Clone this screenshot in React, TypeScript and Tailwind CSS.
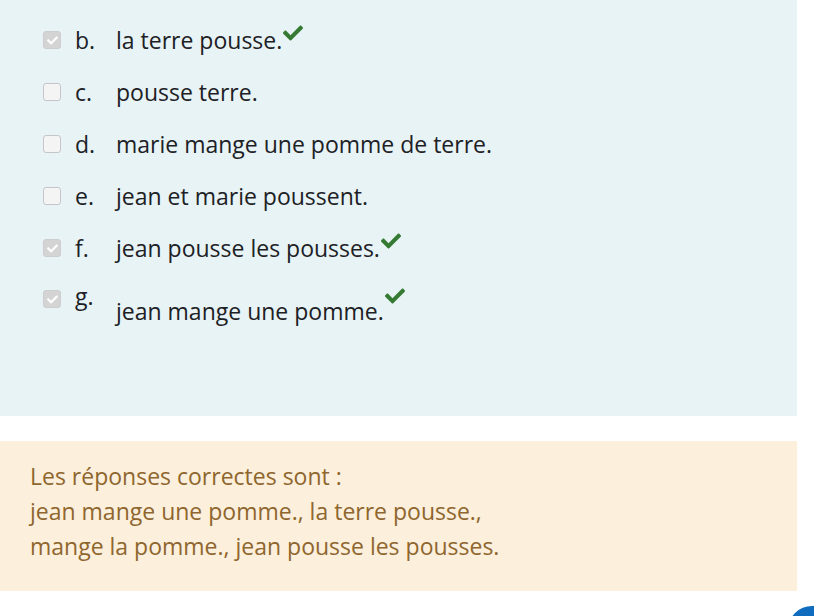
import React from 'react';

type Answer = {
  letter: string;
  text: string;
  checked: boolean;
  correct: boolean;
};

const answers: Answer[] = [
  { letter: 'b.', text: 'la terre pousse.', checked: true, correct: true },
  { letter: 'c.', text: 'pousse terre.', checked: false, correct: false },
  { letter: 'd.', text: 'marie mange une pomme de terre.', checked: false, correct: false },
  { letter: 'e.', text: 'jean et marie poussent.', checked: false, correct: false },
  { letter: 'f.', text: 'jean pousse les pousses.', checked: true, correct: true },
];

function CheckMark({ className = '' }: { className?: string }) {
  return (
    <svg viewBox="0 0 512 512" className={className} fill="currentColor">
      <path d="M173.898 439.404l-166.4-166.4c-9.997-9.997-9.997-26.206 0-36.204l36.203-36.204c9.997-9.998 26.207-9.998 36.204 0L192 312.69 432.095 72.596c9.997-9.997 26.207-9.997 36.204 0l36.203 36.204c9.997 9.997 9.997 26.206 0 36.204l-294.4 294.401c-9.998 9.997-26.207 9.997-36.204-.001z" />
    </svg>
  );
}

function Box({ checked }: { checked: boolean }) {
  if (checked) {
    return (
      <span className="w-[18px] h-[18px] rounded-[3px] bg-[#d4d4d4] border border-[#cdcdcd] flex items-center justify-center shrink-0">
        <CheckMark className="w-[11px] h-[11px] text-white" />
      </span>
    );
  }
  return <span className="w-[18px] h-[18px] rounded-[3px] bg-[#f4f4f4] border border-[#c6c6c6] shrink-0" />;
}

export default function App() {
  return (
    <div className="relative w-[814px] h-[616px] overflow-hidden bg-white text-[#1d2125]" style={{ fontFamily: '"Open Sans", sans-serif' }}>
      <div className="w-[797px] h-[416px] bg-[#e7f3f5] pt-[14px] pl-[43px]">
        {answers.map((a) => (
          <div key={a.letter} className="h-[52px] flex items-center text-[23px]">
            <Box checked={a.checked} />
            <span className="ml-[14px] w-[41px]">{a.letter}</span>
            <span>{a.text}</span>
            {a.correct && <CheckMark className="w-[20px] h-[20px] text-[#357a32] -mt-[14px] ml-[1px]" />}
          </div>
        ))}
        {/* last answer sits lower than its letter */}
        <div className="h-[56px] flex items-start text-[23px] pt-[10px]">
          <span className="mt-[6px]"><Box checked={true} /></span>
          <span className="ml-[14px] w-[41px] leading-[30px] -mt-[3px]">g.</span>
          <span className="leading-[30px] mt-[12px]">jean mange une pomme.</span>
          <CheckMark className="w-[20px] h-[20px] text-[#357a32] mt-[2px] ml-[1px]" />
        </div>
      </div>
      <div className="mt-[25px] w-[797px] h-[150px] bg-[#fcefdc] text-[#8e662e] text-[23px] leading-[35px] pl-[30px] pt-[18px]">
        <div>Les réponses correctes sont :</div>
        <div>jean mange une pomme., la terre pousse.,</div>
        <div>mange la pomme., jean pousse les pousses.</div>
      </div>
      <div className="absolute left-[788px] top-[606px] w-[48px] h-[48px] rounded-full bg-[#0f6cbf]" />
    </div>
  );
}
